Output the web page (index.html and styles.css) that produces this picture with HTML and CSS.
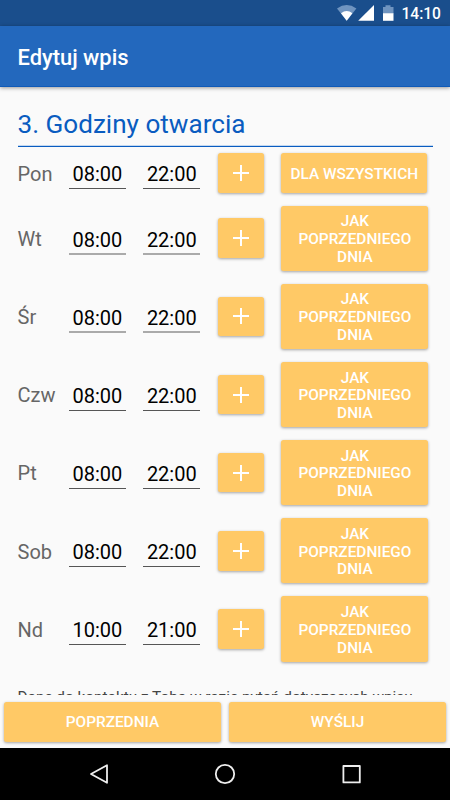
FILE: index.html
```html
<!DOCTYPE html>
<html lang="pl">
<head>
  <meta charset="UTF-8" />
  <meta name="viewport" content="width=device-width, initial-scale=1.0" />
  <title>Edytuj wpis</title>
  <link rel="stylesheet" href="styles.css">
</head>
<body>
  <div class="statusbar">
    <svg class="status-icons" width="60" height="26" viewBox="0 0 60 26">
      <path d="M0 8.4 Q9.7 1.8 19.4 8.4 L9.7 20.8 Z" fill="#6f94c0"/>
      <path d="M4 13.2 Q9.7 8.8 15.4 13.2 L9.7 20.8 Z" fill="#fff"/>
      <path d="M37 5 V20.8 H21.2 Z" fill="#fff"/>
      <path d="M46 7 H48.5 V5.2 H53.5 V7 H56.5 V13.4 H46 Z" fill="#6f94c0"/>
      <path d="M46 13.2 H56.5 V20.8 H46 Z" fill="#fff"/>
    </svg>
    <span class="clock">14:10</span>
  </div>
  <header class="appbar">Edytuj wpis</header>

  <main class="content">
    <h1 class="title">3. Godziny otwarcia</h1>
    <div class="days">
      <div class="day first">
        <span class="label">Pon</span>
        <span class="time">08:00</span>
        <span class="time">22:00</span>
        <button class="btn plus"><svg width="16" height="16" viewBox="0 0 16 16"><path d="M8 0V16M0 8H16"/></svg></button>
        <button class="btn copy">DLA WSZYSTKICH</button>
      </div>
      <div class="day">
        <span class="label">Wt</span>
        <span class="time soft">08:00</span>
        <span class="time soft">22:00</span>
        <button class="btn plus"><svg width="16" height="16" viewBox="0 0 16 16"><path d="M8 0V16M0 8H16"/></svg></button>
        <button class="btn copy">JAK<br>POPRZEDNIEGO<br>DNIA</button>
      </div>
      <div class="day">
        <span class="label">Śr</span>
        <span class="time soft">08:00</span>
        <span class="time soft">22:00</span>
        <button class="btn plus"><svg width="16" height="16" viewBox="0 0 16 16"><path d="M8 0V16M0 8H16"/></svg></button>
        <button class="btn copy">JAK<br>POPRZEDNIEGO<br>DNIA</button>
      </div>
      <div class="day">
        <span class="label">Czw</span>
        <span class="time">08:00</span>
        <span class="time">22:00</span>
        <button class="btn plus"><svg width="16" height="16" viewBox="0 0 16 16"><path d="M8 0V16M0 8H16"/></svg></button>
        <button class="btn copy">JAK<br>POPRZEDNIEGO<br>DNIA</button>
      </div>
      <div class="day">
        <span class="label">Pt</span>
        <span class="time">08:00</span>
        <span class="time">22:00</span>
        <button class="btn plus"><svg width="16" height="16" viewBox="0 0 16 16"><path d="M8 0V16M0 8H16"/></svg></button>
        <button class="btn copy">JAK<br>POPRZEDNIEGO<br>DNIA</button>
      </div>
      <div class="day">
        <span class="label">Sob</span>
        <span class="time">08:00</span>
        <span class="time">22:00</span>
        <button class="btn plus"><svg width="16" height="16" viewBox="0 0 16 16"><path d="M8 0V16M0 8H16"/></svg></button>
        <button class="btn copy">JAK<br>POPRZEDNIEGO<br>DNIA</button>
      </div>
      <div class="day">
        <span class="label">Nd</span>
        <span class="time">10:00</span>
        <span class="time">21:00</span>
        <button class="btn plus"><svg width="16" height="16" viewBox="0 0 16 16"><path d="M8 0V16M0 8H16"/></svg></button>
        <button class="btn copy">JAK<br>POPRZEDNIEGO<br>DNIA</button>
      </div>
    </div>
    <p class="contact">Dane do kontaktu z Tobą w razie pytań dotyczących wpisu.</p>
  </main>

  <footer class="actions">
    <button class="btn">POPRZEDNIA</button>
    <button class="btn">WYŚLIJ</button>
  </footer>

  <nav class="navbar">
    <svg width="450" height="52" viewBox="0 0 450 52">
      <path d="M107 17.2 V34.8 L91 26 Z"/>
      <circle cx="225" cy="26" r="9.2"/>
      <rect x="343.4" y="18" width="16.4" height="16.4"/>
    </svg>
  </nav>
</body>
</html>
```
FILE: styles.css
```css
* {
  box-sizing: border-box;
}
body {
  margin: 0;
  width: 450px;
  height: 800px;
  overflow: hidden;
  display: flex;
  flex-direction: column;
  background: #fafafa;
  font-family: Roboto, sans-serif;
}
.statusbar {
  height: 26px;
  flex: none;
  display: flex;
  justify-content: flex-end;
  align-items: center;
  padding-right: 9px;
  gap: 4px;
  background: #1a4e8c;
  color: #fff;
}
.clock {
  font-size: 15.6px;
  font-weight: 500;
  line-height: 26px;
  padding-top: 2px;
}
.appbar {
  height: 61px;
  flex: none;
  padding-left: 17.5px;
  background: #2368bd;
  border-bottom: 1px solid #0f5ab8;
  color: #fff;
  font-size: 21.9px;
  font-weight: 500;
  line-height: 64px;
  box-shadow: 0 1px 4px rgba(0, 0, 0, 0.4);
  z-index: 1;
}
.content {
  height: 608px;
  flex: none;
  padding: 17px 17.5px 0;
  overflow: hidden;
}
.title {
  margin: 0;
  height: 43px;
  border-bottom: 1px solid #0a5cc0;
  color: #0a5cc0;
  font-size: 26.1px;
  font-weight: 400;
  line-height: 40px;
  box-shadow: inset 0 -1px 0 #c3d8f0;
}
.days {
  display: flex;
  flex-direction: column;
  gap: 12.8px;
  padding-top: 6.2px;
}
.day {
  display: grid;
  grid-template-columns: 34px 57px 57px 46.4px 147px;
  column-gap: 17.4px;
  align-items: center;
  height: 65.35px;
}
.first {
  height: 39.6px;
}
.label {
  padding-top: 1.6px;
  font-size: 20px;
  color: #666;
}
.time {
  height: 31px;
  margin-top: 2px;
  border-bottom: 1px solid #555;
  text-align: center;
  font-size: 20px;
  line-height: 32px;
  color: #000;
}
/* underline falls between two pixel rows here */
.soft {
  border-bottom: 2px solid #aaa;
}
.btn {
  border: 0;
  border-radius: 2.5px;
  background: #ffc966;
  color: #fff;
  box-shadow: 0 1px 3px rgba(0, 0, 0, 0.35);
  font-family: inherit;
  font-size: 15.4px;
  font-weight: 500;
  line-height: 17.8px;
  padding: 2px 0 0;
}
.plus {
  height: 39.6px;
  padding: 0;
  display: flex;
  align-items: center;
  justify-content: center;
}
.plus path {
  stroke: #fff;
  stroke-width: 2;
}
.copy {
  height: 100%;
  padding-top: 3.4px;
}
.first .copy {
  width: 145.6px;
  padding-top: 3px;
}
.contact {
  margin: 26px 0 0;
  font-size: 15.35px;
  line-height: 18px;
  color: #444;
  white-space: nowrap;
}
.actions {
  height: 52.5px;
  flex: none;
  display: grid;
  grid-template-columns: 1fr 1fr;
  gap: 8.8px;
  padding: 6.8px 4.4px 6px;
}
.navbar {
  flex: 1;
  background: #000;
}
.navbar svg {
  display: block;
  fill: none;
  stroke: #eee;
  stroke-width: 1.8;
  stroke-linejoin: round;
}
```
